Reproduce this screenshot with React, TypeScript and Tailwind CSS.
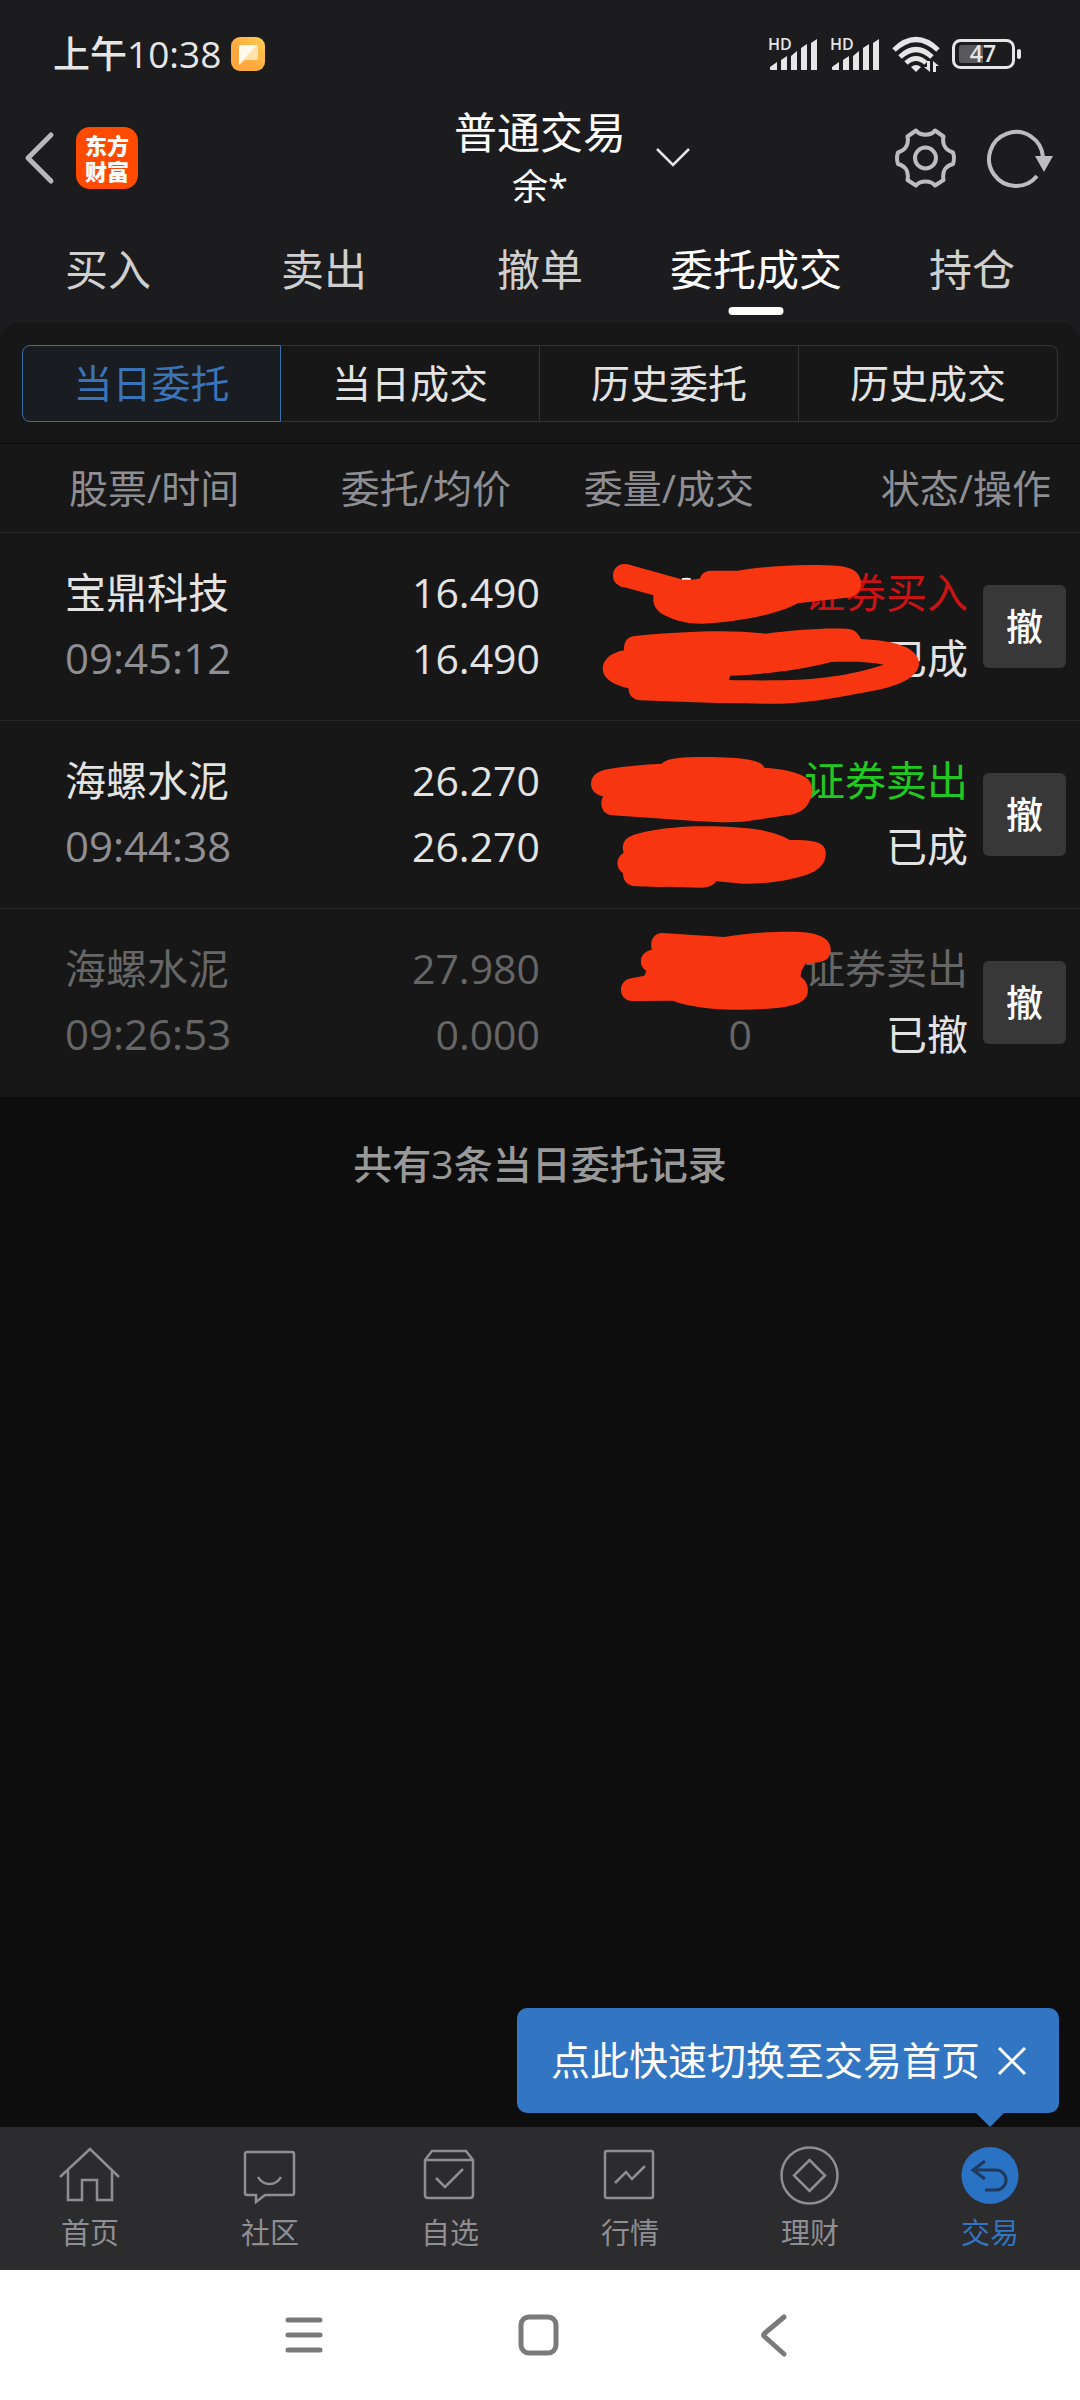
import React, { useState } from "react";

// ---------------------------------------------------------------------------
// Types
// ---------------------------------------------------------------------------
interface Order {
  name: string;
  time: string;
  price: string;
  avgPrice: string;
  filled?: string;
  side: string;
  sideClass: string;
  status: string;
  cancelled?: boolean;
  scribble: { viewBox: string; paths: string[]; peek?: string };
}

interface NavItem {
  label: string;
  icon: React.ReactNode;
}

// ---------------------------------------------------------------------------
// Data
// ---------------------------------------------------------------------------
const TABS = ["买入", "卖出", "撤单", "委托成交", "持仓"];

const SEGMENTS = ["当日委托", "当日成交", "历史委托", "历史成交"];

const ORDERS: Order[] = [
  {
    name: "宝鼎科技",
    time: "09:45:12",
    price: "16.490",
    avgPrice: "16.490",
    side: "证券买入",
    sideClass: "text-[#c81414]",
    status: "已成",
    scribble: {
      viewBox: "0 639 1568 564",
      paths: [
        "M245 732C225 732 212 748 212 767C212 785 225 799 245 802L330 826C325 850 335 870 360 885C400 905 430 911 470 911C560 908 690 885 748 850L890 833C920 830 934 810 932 788C930 755 905 743 870 738C770 730 650 738 575 752L495 752C478 753 468 762 465 775C445 780 425 782 408 777L262 735C257 733 250 732 245 732Z",
        "M275 948C250 950 243 970 244 991C205 998 182 1020 182 1047C184 1078 215 1095 257 1105C257 1125 270 1140 292 1141C400 1144 520 1152 700 1151C800 1148 900 1125 980 1110C1050 1095 1098 1070 1101 1030C1098 985 1040 962 932 957C922 935 910 927 890 926C800 924 730 932 655 941C550 930 450 932 275 948ZM548 1080L553 1067C650 1063 760 1050 845 1026C900 1024 960 1025 998 1034C940 1055 850 1075 730 1080C660 1082 600 1081 548 1080Z",
      ],
      peek: "M412 775Q425 772 438 775V779H412Z",
    },
  },
  {
    name: "海螺水泥",
    time: "09:44:38",
    price: "26.270",
    avgPrice: "26.270",
    side: "证券卖出",
    sideClass: "text-[#20c820]",
    status: "已成",
    scribble: {
      viewBox: "0 63 1568 564",
      paths: [
        "M353 191C370 178 390 174 430 172C500 170 570 172 610 180C635 185 648 193 651 203C700 206 750 215 775 235C792 250 796 275 785 298C775 325 760 335 735 343L600 364C560 369 500 366 440 362L210 346C185 343 178 325 178 308C178 300 181 295 183 289C160 285 148 270 148 250C150 225 170 213 195 208C245 199 300 193 353 191Z",
        "M725 420C770 419 800 422 815 432C828 440 832 455 829 470C826 495 805 512 775 524C720 543 650 552 590 551L512 544C503 557 490 562 470 563L370 560C340 562 300 560 270 558C250 553 241 540 241 520C228 510 224 498 225 486C226 473 233 465 243 458C237 440 241 420 260 410C285 396 350 385 420 380C500 377 580 380 640 390C675 397 705 407 725 420Z",
      ],
    },
  },
  {
    name: "海螺水泥",
    time: "09:26:53",
    price: "27.980",
    avgPrice: "0.000",
    filled: "0",
    side: "证券卖出",
    sideClass: "text-[#666666]",
    status: "已撤",
    cancelled: true,
    scribble: {
      viewBox: "0 627 1568 564",
      paths: [
        "M355 699L535 711C600 700 660 694 740 695C780 696 815 702 832 720C846 733 848 755 838 772C828 785 812 790 772 789C768 800 757 808 757 830C775 843 780 860 777 880C772 905 745 915 710 921C650 930 560 931 500 926C450 921 410 912 385 902L265 903C245 901 235 887 235 868C236 850 248 838 265 835L303 827L309 813C297 805 292 795 293 780C295 763 308 752 325 749C318 725 328 700 355 699Z",
      ],
    },
  },
];

const NAV_ITEMS: NavItem[] = [
  {
    label: "首页",
    icon: (
      <path d="M2 34L32 6L61 34M10 27V57H24V37H39V57H54V27" />
    ),
  },
  {
    label: "社区",
    icon: (
      <path d="M9 9H54Q56 9 56 11V50Q56 52 54 52H27L18 59V52H9Q7 52 7 50V11Q7 9 9 9ZM20 34Q24 41 31.500 41T43 34" />
    ),
  },
  {
    label: "自选",
    icon: (
      <path d="M7 17L14 8H48L55 17V52Q55 55 52 55H10Q7 55 7 52ZM7 17H55M18 35L27 44L45 26" />
    ),
  },
  {
    label: "行情",
    icon: (
      <path d="M9 8H53Q55 8 55 10V53Q55 55 53 55H9Q7 55 7 53V10Q7 8 9 8ZM17 40L28 29L34 36L47 23" />
    ),
  },
  {
    label: "理财",
    icon: (
      <>
        <circle cx="31.500" cy="32.500" r="28" />
        <path d="M31.500 17L47 32.500L31.500 48L16 32.500Z" />
      </>
    ),
  },
  {
    label: "交易",
    icon: (
      <>
        <circle cx="32" cy="32.500" r="28.500" fill="#2a72c4" stroke="none" />
        <path
          d="M27 18L15 27L27 36M15 27H38A10 10 0 0 1 38 47H27"
          stroke="#1f3a5c"
          strokeWidth="3"
        />
      </>
    ),
  },
];

// ---------------------------------------------------------------------------
// Status bar
// ---------------------------------------------------------------------------
function SignalIcon() {
  return (
    <div className="relative">
      <span className="absolute top-0 left-0 text-[16px] leading-[16px] font-semibold">HD</span>
      <svg width="50" height="36" viewBox="0 0 50 36" fill="#e6e6e6">
        <path d="M2 31L9 26V34H3Q2 34 2 33ZM13 24L19 20V34H13ZM23 20L29 15V34H23ZM33 12L39 8V34H33ZM43 7L49 3V34H43Z" />
      </svg>
    </div>
  );
}

function StatusBar() {
  return (
    <div className="flex h-[102px] items-center justify-between pt-[6px] pr-[58px] pl-[53px] text-[#e6e6e6]">
      <div className="flex items-center gap-[10px]">
        <span className="text-[37px] leading-[50px] font-medium">上午10:38</span>
        <svg width="34" height="34" viewBox="0 0 34 34">
          <defs>
            <linearGradient id="note" x1="0" y1="1" x2="1" y2="0">
              <stop offset="0.400" stopColor="#ffa940" />
              <stop offset="1" stopColor="#ffcf55" />
            </linearGradient>
          </defs>
          <rect width="34" height="34" rx="9" fill="url(#note)" />
          <path d="M10 8H25Q27 8 27 10V21Q27 23 25 23H14L8 28V10Q8 8 10 8Z" fill="#ffe2ae" />
          <path d="M10 8H26L8 27V10Q8 8 10 8Z" fill="#fffaf0" />
        </svg>
      </div>
      <div className="flex items-center gap-3">
        <SignalIcon />
        <SignalIcon />
        <svg width="48" height="38" viewBox="0 0 48 38" fill="none" stroke="#e6e6e6" strokeWidth="5">
          <path d="M2 15Q24 -6 46 15M8 22Q24 7 40 22M14 28Q24 19 34 28" />
          <path d="M19 32Q24 28 29 32L24 37Z" fill="#e6e6e6" stroke="none" />
          <path d="M38 26V37L32 32H35V26ZM41 37V26L47 31H44V37Z" fill="#e6e6e6" stroke="none" />
        </svg>
        <svg width="70" height="32" viewBox="0 0 70 32">
          <rect x="1.500" y="2.500" width="60" height="27" rx="7" fill="none" stroke="#e6e6e6" strokeWidth="3" />
          <path d="M10 7H31V25H10Q7 25 7 22V10Q7 7 10 7Z" fill="#59595b" />
          <rect x="65" y="11" width="4" height="10" rx="2" fill="#e6e6e6" />
          <text x="31" y="24" fontSize="23" fontWeight="600" fontFamily="Open Sans" textAnchor="middle" fill="#e6e6e6">
            47
          </text>
        </svg>
      </div>
    </div>
  );
}

// ---------------------------------------------------------------------------
// Header
// ---------------------------------------------------------------------------
function Header() {
  return (
    <header className="grid h-[108px] grid-cols-[1fr_auto_1fr] items-center">
      <div className="flex items-center gap-5 pl-6">
        <button type="button" aria-label="返回">
          <svg width="32" height="56" viewBox="0 0 32 56" fill="none" stroke="#b8b8b8" strokeWidth="5" strokeLinecap="round" strokeLinejoin="round">
            <path d="M27 5L4 28L27 51" />
          </svg>
        </button>
        <div className="flex h-[62px] w-[62px] flex-col items-center justify-center rounded-[14px] bg-[#ff4a00] text-[22px] leading-[26px] font-black text-white">
          <span>东方</span>
          <span>财富</span>
        </div>
      </div>
      <h1 className="pt-1 text-center text-white">
        <span className="block text-[43px] leading-[54px]">普通交易</span>
        <span className="block text-[36px] leading-[54px]">余*</span>
      </h1>
      <div className="flex items-center justify-between pr-[26px] pl-[28px]">
        <button type="button" aria-label="切换账户">
          <svg width="38" height="24" viewBox="0 0 38 24" fill="none" stroke="#e6e6e6" strokeWidth="2.500">
            <path d="M3 3L19 19L35 3" />
          </svg>
        </button>
        <div className="flex items-center gap-7">
          <button type="button" aria-label="设置">
            <svg width="64" height="64" viewBox="0 0 64 64" fill="none" stroke="#bdbdbd" strokeWidth="4" strokeLinejoin="round">
              <path d="M22 4.500C26 10 37 10 41 4.500L49.500 10.500C48 18 51 24 59 26.500Q61 32 59 38C51 40 48 46 49.500 54L41 59.500C37 54 26 54 22 59.500L13.500 54C15 46 12 40 4 38Q2 32 4 26.500C12 24 15 18 13.500 10.500Z" />
              <circle cx="31.500" cy="32" r="10.500" />
            </svg>
          </button>
          <button type="button" aria-label="刷新">
            <svg width="68" height="64" viewBox="0 0 68 64" fill="none" stroke="#bdbdbd" strokeWidth="4">
              <path d="M51 50A27 27 0 1 1 57 31" />
              <path d="M49 30H67L58 46Z" fill="#bdbdbd" stroke="none" />
            </svg>
          </button>
        </div>
      </div>
    </header>
  );
}

// ---------------------------------------------------------------------------
// Orders table
// ---------------------------------------------------------------------------
function Scribble({ viewBox, paths, peek }: Order["scribble"]) {
  return (
    <svg
      viewBox={viewBox}
      preserveAspectRatio="none"
      className="pointer-events-none absolute top-0 left-0 z-10 h-[188px] w-[540px] max-w-none"
      fill="#f73611"
      fillRule="evenodd"
      aria-hidden="true"
    >
      {paths.map((d) => (
        <path key={d} d={d} />
      ))}
      {peek && <path d={peek} fill="#ffffff" />}
    </svg>
  );
}

function OrderRow({ order }: { order: Order }) {
  const main = order.cancelled ? "text-[#666666]" : "text-[#e3e3e3]";
  const sub = order.cancelled ? "text-[#666666]" : "text-[#8e8e93]";

  return (
    <tr className="h-[188px] border-t border-[#262626] text-[41px] leading-[66px]">
      <td className="pb-[3px] pl-[65px]">
        <div className={main}>{order.name}</div>
        <div className={`text-[42px] ${sub}`}>{order.time}</div>
      </td>
      <td className={`pb-[3px] text-right ${main}`}>
        <div>{order.price}</div>
        <div>{order.avgPrice}</div>
      </td>
      <td className={`relative pr-1 pb-[3px] text-right ${main}`}>
        <div className="h-[66px]" />
        <div className="h-[66px]">{order.filled}</div>
        <Scribble {...order.scribble} />
      </td>
      <td className="pr-1 pb-[3px] text-right">
        <div className={order.sideClass}>{order.side}</div>
        <div className="text-[#e3e3e3]">{order.status}</div>
      </td>
      <td className="pr-[14px]">
        <button
          type="button"
          className="ml-auto flex h-[83px] w-[83px] items-center justify-center rounded-md bg-[#383838] text-[37px] font-medium text-white"
        >
          撤
        </button>
      </td>
    </tr>
  );
}

function OrdersTable() {
  return (
    <table className="w-full table-fixed border-collapse">
      <colgroup>
        <col className="w-[28%]" />
        <col className="w-[22%]" />
        <col className="w-[20%]" />
        <col className="w-[20%]" />
        <col className="w-[10%]" />
      </colgroup>
      <thead>
        <tr className="h-[89px] border-t border-[#0a0a0a] text-[39px] text-[#8e8e93]">
          <th className="pl-[69px] text-left font-normal">股票/时间</th>
          <th className="pr-[29px] text-right font-normal">委托/均价</th>
          <th className="pr-[2px] text-right font-normal">委量/成交</th>
          <th colSpan={2} className="pr-[29px] text-right font-normal">
            状态/操作
          </th>
        </tr>
      </thead>
      <tbody>
        {ORDERS.map((order) => (
          <OrderRow key={order.time} order={order} />
        ))}
      </tbody>
    </table>
  );
}

// ---------------------------------------------------------------------------
// Bottom
// ---------------------------------------------------------------------------
function SwitchTip({ onClose }: { onClose: () => void }) {
  return (
    <div className="absolute right-[21px] bottom-[14px] flex h-[105px] items-center gap-4 rounded-[10px] bg-[#3175c3] pr-[31px] pl-[34px] text-white">
      <span className="text-[39px] whitespace-nowrap">点此快速切换至交易首页</span>
      <button type="button" aria-label="关闭" onClick={onClose}>
        <svg width="32" height="32" viewBox="0 0 32 32" fill="none" stroke="#ffffff" strokeWidth="3">
          <path d="M3 3L29 29M29 3L3 29" />
        </svg>
      </button>
      <svg width="28" height="15" viewBox="0 0 28 15" className="absolute top-full right-[55px]" fill="#3175c3">
        <path d="M0 0H28L14 14Z" />
      </svg>
    </div>
  );
}

function BottomNav() {
  return (
    <nav className="grid h-[143px] grid-cols-6 bg-[#2c2c2e] pt-4">
      {NAV_ITEMS.map((item) => (
        <a
          key={item.label}
          href="#"
          className={`flex flex-col items-center gap-[6px] text-[29px] leading-[40px] ${
            item.label === "交易" ? "text-[#3175c3]" : "text-[#8e8e93]"
          }`}
        >
          <svg width="64" height="64" viewBox="0 0 64 64" fill="none" stroke="#8e8e93" strokeWidth="2.500">
            {item.icon}
          </svg>
          {item.label}
        </a>
      ))}
    </nav>
  );
}

function SystemNav() {
  return (
    <div className="flex h-[130px] items-center justify-center gap-[187px] bg-white">
      <button type="button" aria-label="最近任务">
        <svg width="48" height="48" viewBox="0 0 48 48" stroke="#7a7a7a" strokeWidth="5" strokeLinecap="round">
          <path d="M7 9H39M7 24H39M7 39H39" />
        </svg>
      </button>
      <button type="button" aria-label="主屏幕">
        <svg width="48" height="48" viewBox="0 0 48 48" fill="none" stroke="#7a7a7a" strokeWidth="5">
          <rect x="5" y="6" width="35" height="36" rx="8" />
        </svg>
      </button>
      <button type="button" aria-label="系统返回">
        <svg width="48" height="48" viewBox="0 0 48 48" fill="none" stroke="#7a7a7a" strokeWidth="5" strokeLinecap="round" strokeLinejoin="round">
          <path d="M33 6L14 22Q11 24 14 26L33 43" />
        </svg>
      </button>
    </div>
  );
}

// ---------------------------------------------------------------------------
// Page
// ---------------------------------------------------------------------------
export default function App() {
  const [tab, setTab] = useState("委托成交");
  const [segment, setSegment] = useState("当日委托");
  const [showTip, setShowTip] = useState(true);

  return (
    <div className="flex min-h-screen flex-col bg-[#1c1c1e] font-['Open_Sans','Noto_Sans_CJK_SC',sans-serif]">
      <StatusBar />
      <Header />

      {/* Trade tabs */}
      <nav className="grid h-[113px] grid-cols-5 pt-2">
        {TABS.map((name) => (
          <button
            key={name}
            type="button"
            onClick={() => setTab(name)}
            className={`relative text-[43px] ${tab === name ? "text-white" : "text-[#cfcfcf]"}`}
          >
            {name}
            {tab === name && (
              <span className="absolute bottom-2 left-1/2 h-2 w-[55px] -translate-x-1/2 rounded-full bg-white" />
            )}
          </button>
        ))}
      </nav>

      <main className="relative flex flex-1 flex-col rounded-t-[20px] bg-[#0d0d0d]">
        <div className="rounded-t-[20px] bg-[#171717]">
          {/* Order type switch */}
          <div className="grid grid-cols-4 px-[22px] pt-[22px] pb-[21px]">
            {SEGMENTS.map((name) => (
              <button
                key={name}
                type="button"
                onClick={() => setSegment(name)}
                className={`h-[77px] border text-[39px] first:rounded-l-lg last:rounded-r-lg ${
                  segment === name
                    ? "border-[#3b6ea8] bg-[#191d22] text-[#3a74b8]"
                    : "border-l-0 border-[#333333] text-[#e3e3e3]"
                }`}
              >
                {name}
              </button>
            ))}
          </div>
          <OrdersTable />
        </div>
        <p className="pt-[40px] text-center text-[39px] leading-[54px] font-medium text-[#999999]">
          共有3条当日委托记录
        </p>
        {showTip && <SwitchTip onClose={() => setShowTip(false)} />}
      </main>

      <BottomNav />
      <SystemNav />
    </div>
  );
}
